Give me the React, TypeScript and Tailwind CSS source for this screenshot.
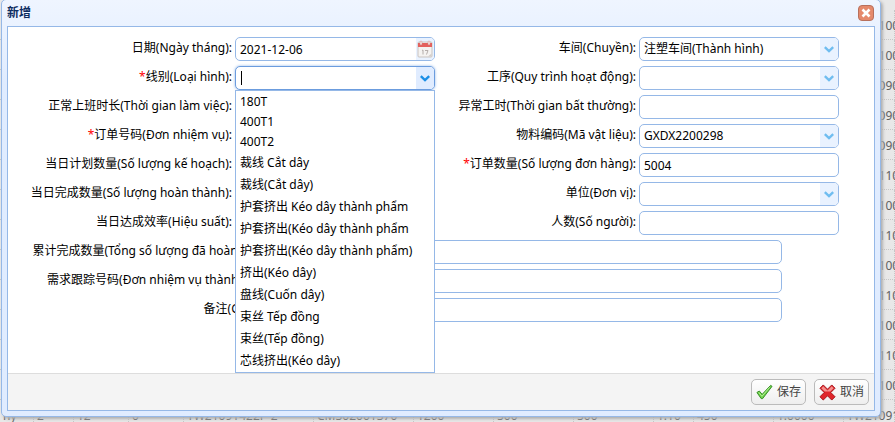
import type { ReactNode } from "react";

const FIELD =
  "h-6 w-[200px] rounded-[5px] border border-[#95b8e7] bg-white px-1 text-xs text-black outline-none";

function Label({ id, text, required }: { id: string; text: string; required?: boolean }) {
  return (
    <label htmlFor={id} className="pb-0.5 text-right leading-5 whitespace-nowrap">
      {required && <span className="text-[#ff0000]">*</span>}
      {text}:
    </label>
  );
}

function Arrow({ active }: { active?: boolean }) {
  return (
    <span
      className={
        active
          ? "pointer-events-none absolute inset-y-px right-px flex w-[18px] items-center justify-center rounded-r-[4px] bg-[#e0ecff] text-[#1b8fe6]"
          : "pointer-events-none absolute inset-y-px right-px flex w-[18px] items-center justify-center rounded-r-[4px] bg-[#e9f2ff] text-[#6fbdf0]"
      }
    >
      <svg width="10" height="7" viewBox="0 0 10 7" fill="none" stroke="currentColor" strokeWidth="2.4">
        <path d="M0.8 1.2 5 5.2 9.2 1.2" />
      </svg>
    </span>
  );
}

function SelectField({ id, value }: { id: string; value?: string }) {
  return (
    <span className="relative w-[200px]">
      <select id={id} defaultValue={value} className={`${FIELD} block appearance-none`}>
        <option>{value ?? ""}</option>
      </select>
      <Arrow />
    </span>
  );
}

function TextField({ id, value }: { id: string; value?: string }) {
  return <input id={id} type="text" defaultValue={value} className={FIELD} />;
}

function DateField({ id, value }: { id: string; value: string }) {
  return (
    <span className="relative w-[200px]">
      <input id={id} type="text" defaultValue={value} className={`${FIELD} block`} />
      <button
        type="button"
        aria-label="日历"
        className="absolute inset-y-px right-px flex w-[18px] items-center justify-center rounded-r-[4px] bg-[#e9f2ff]"
      >
        <svg width="16" height="18" viewBox="0 0 16 18">
          <rect x="1" y="2" width="14" height="15" rx="1" fill="#f5f3f1" stroke="#c9c3c0" />
          <path d="M1 3h14v4H1z" fill="#e4605c" />
          <rect x="3" y="1" width="2" height="4" rx="1" fill="#f7e6e4" stroke="#c98f8c" strokeWidth=".5" />
          <rect x="11" y="1" width="2" height="4" rx="1" fill="#f7e6e4" stroke="#c98f8c" strokeWidth=".5" />
          <path d="M5 10.500l1-.5v4.500M8 10.500h3l-1.500 4" fill="none" stroke="#b5aeab" />
          <path d="M11 16.500l3.500-3v3z" fill="#d3cdca" />
        </svg>
      </button>
    </span>
  );
}

const SHORT_OPTIONS = ["180T", "400T1", "400T2"];
const LONG_OPTIONS = [
  "裁线 Cắt dây",
  "裁线(Cắt dây)",
  "护套挤出 Kéo dây thành phẩm",
  "护套挤出(Kéo dây thành phẩm",
  "护套挤出(Kéo dây thành phẩm)",
  "挤出(Kéo dây)",
  "盘线(Cuốn dây)",
  "束丝 Tếp đồng",
  "束丝(Tếp đồng)",
  "芯线挤出(Kéo dây)",
];

function OpenCombo({ id }: { id: string }) {
  return (
    <span className="relative w-[200px]">
      <input
        id={id}
        type="text"
        role="combobox"
        aria-expanded="true"
        aria-controls="line-options"
        className="block h-6 w-[200px] rounded-[5px] border border-[#6b9cde] bg-white px-1 text-xs shadow-[0_0_3px_#95b8e7] outline-none"
      />
      <span className="absolute top-[5px] left-[6px] h-3.5 w-px bg-black" />
      <Arrow active />
      <ul
        id="line-options"
        role="listbox"
        className="absolute top-full left-0 z-10 w-full border border-[#95b8e7] bg-white pt-px"
      >
        {SHORT_OPTIONS.map((o) => (
          <li key={o} role="option" aria-selected="false" className="h-5 px-1 leading-5">
            {o}
          </li>
        ))}
        {LONG_OPTIONS.map((o) => (
          <li key={o} role="option" aria-selected="false" className="h-[22px] px-1 leading-[22px] whitespace-nowrap">
            {o}
          </li>
        ))}
      </ul>
    </span>
  );
}

function PairRow({ children }: { children: ReactNode }) {
  return <div className="grid h-6 grid-cols-[224px_200px_198px_200px] items-center gap-x-[3px]">{children}</div>;
}

function WideRow({ id, text }: { id: string; text: string }) {
  return (
    <div className="grid h-6 grid-cols-[273px_498px] items-center gap-x-[3px]">
      <Label id={id} text={text} />
      <input id={id} type="text" className="h-6 w-full rounded-[5px] border border-[#95b8e7] bg-white px-1 text-xs outline-none" />
    </div>
  );
}

const ORDER_CODES = [
  "TW21100", "TW21100", "TW21090", "TW21090", "TW21090", "TW21110", "TW21100",
  "TW21110", "TW21100", "TW21110", "TW21100", "TW21110", "TW21100",
];
const LAST_ROW = ["ny", "2", "12", "0", "TW21091422P-2", "CM302001370", "1200", "500", "500", "1.10", "450", "1.0000", "TW21091"];
const CELL = "h-[30px] border-r border-b border-dotted border-[#c6c6c6] px-[3px] pt-0.5 whitespace-nowrap";

function BackgroundGrid() {
  return (
    <table className="mt-[10px] w-full table-fixed border-separate border-spacing-0 text-[#606060]">
      <colgroup>
        <col className="w-[34px]" />
        <col className="w-[40px]" />
        <col className="w-[55px]" />
        <col className="w-[55px]" />
        <col className="w-[130px]" />
        <col className="w-[100px]" />
        <col className="w-[80px]" />
        <col className="w-[80px]" />
        <col className="w-[80px]" />
        <col className="w-[40px]" />
        <col className="w-[80px]" />
        <col className="w-[70px]" />
        <col />
      </colgroup>
      <tbody>
        {ORDER_CODES.map((code, i) => (
          <tr key={i}>
            <td colSpan={12} className={CELL} />
            <td className={CELL}>{code}</td>
          </tr>
        ))}
        <tr>
          {LAST_ROW.map((c, i) => (
            <td key={i} className={CELL}>{c}</td>
          ))}
        </tr>
      </tbody>
    </table>
  );
}

const BUTTON =
  "flex h-[26px] items-center gap-1 rounded-[5px] border border-[#bbbbbb] bg-linear-to-b from-white to-[#eeeeee] px-1 text-xs text-[#444444]";

export default function App() {
  return (
    <div className="relative h-screen overflow-hidden bg-[#e8e8e8] font-['Noto_Sans','Noto_Sans_CJK_SC',sans-serif] text-xs">
      <BackgroundGrid />
      <section
        role="dialog"
        aria-labelledby="dialog-title"
        className="absolute -top-px right-[14px] left-px flex flex-col rounded-[5px] border border-[#95b8e7] bg-linear-to-b from-[#eff5ff] to-[#e0ecff] to-[20%] p-[5px] pt-0 text-black shadow-[2px_2px_3px_#b0b0b0]"
      >
        <header className="flex h-[26px] items-center justify-between pr-px">
          <h1 id="dialog-title" className="text-xs font-bold text-[#0e2d5f]">新增</h1>
          <button type="button" aria-label="关闭" className="flex size-4 items-center justify-center rounded-[4px] border border-[#b8705c] bg-[#e58a6c]">
            <svg width="10" height="10" viewBox="0 0 10 10" stroke="#fff" strokeWidth="2.600">
              <path d="M1.500 1.500l7 7M8.500 1.500l-7 7" />
            </svg>
          </button>
        </header>
        <div className="border border-[#95b8e7] bg-white">
          <form className="flex flex-col gap-[5px] pt-2.5 pb-[51px]">
            <PairRow>
              <Label id="date" text="日期(Ngày tháng)" />
              <DateField id="date" value="2021-12-06" />
              <Label id="workshop" text="车间(Chuyền)" />
              <SelectField id="workshop" value="注塑车间(Thành hình)" />
            </PairRow>
            <PairRow>
              <Label id="line" text="线别(Loại hình)" required />
              <OpenCombo id="line" />
              <Label id="process" text="工序(Quy trình hoạt động)" />
              <SelectField id="process" />
            </PairRow>
            <PairRow>
              <Label id="hours" text="正常上班时长(Thời gian làm việc)" />
              <TextField id="hours" />
              <Label id="extra" text="异常工时(Thời gian bất thường)" />
              <TextField id="extra" />
            </PairRow>
            <PairRow>
              <Label id="order" text="订单号码(Đơn nhiệm vụ)" required />
              <TextField id="order" />
              <Label id="material" text="物料编码(Mã vật liệu)" />
              <SelectField id="material" value="GXDX2200298" />
            </PairRow>
            <PairRow>
              <Label id="planned" text="当日计划数量(Số lượng kế hoạch)" />
              <TextField id="planned" />
              <Label id="quantity" text="订单数量(Số lượng đơn hàng)" required />
              <TextField id="quantity" value="5004" />
            </PairRow>
            <PairRow>
              <Label id="done" text="当日完成数量(Số lượng hoàn thành)" />
              <TextField id="done" />
              <Label id="unit" text="单位(Đơn vị)" />
              <SelectField id="unit" />
            </PairRow>
            <PairRow>
              <Label id="rate" text="当日达成效率(Hiệu suất)" />
              <TextField id="rate" />
              <Label id="people" text="人数(Số người)" />
              <TextField id="people" />
            </PairRow>
            <WideRow id="total" text="累计完成数量(Tổng số lượng đã hoàn thành)" />
            <WideRow id="tracking" text="需求跟踪号码(Đơn nhiệm vụ thành phẩm)" />
            <WideRow id="note" text="备注(Ghi chú)" />
          </form>
          <footer className="flex h-[37px] items-center justify-end gap-2 border-t border-[#dddddd] bg-[#f4f4f4] px-[5px]">
            <button type="button" className={BUTTON}>
              <svg width="17" height="16" viewBox="0 0 18 16">
                <path d="M1 8.500 3.500 7 6.500 10.500 15.500 1 17 2 7 15 5.500 15Z" fill="#6fd04a" stroke="#2f8a1f" strokeWidth="1" strokeLinejoin="round" />
                <path d="M3 8.500l3.300 4L14.500 3" fill="none" stroke="#b7f09a" strokeWidth="1" />
              </svg>
              保存
            </button>
            <button type="button" className={BUTTON}>
              <svg width="17" height="17" viewBox="0 0 18 18">
                <path d="M4.500 1 9 5.500 13.500 1 17 4.500 12.500 9l4.500 4.500-3.500 3.500L9 12.500 4.500 17 1 13.500 5.500 9 1 4.500Z" fill="#e0262b" stroke="#a31218" strokeWidth="1" strokeLinejoin="round" />
                <path d="M2.500 4.500l2-2L9 7l4.500-4.500 2 2L12 8H6Z" fill="#f5908e" />
              </svg>
              取消
            </button>
          </footer>
        </div>
      </section>
    </div>
  );
}
